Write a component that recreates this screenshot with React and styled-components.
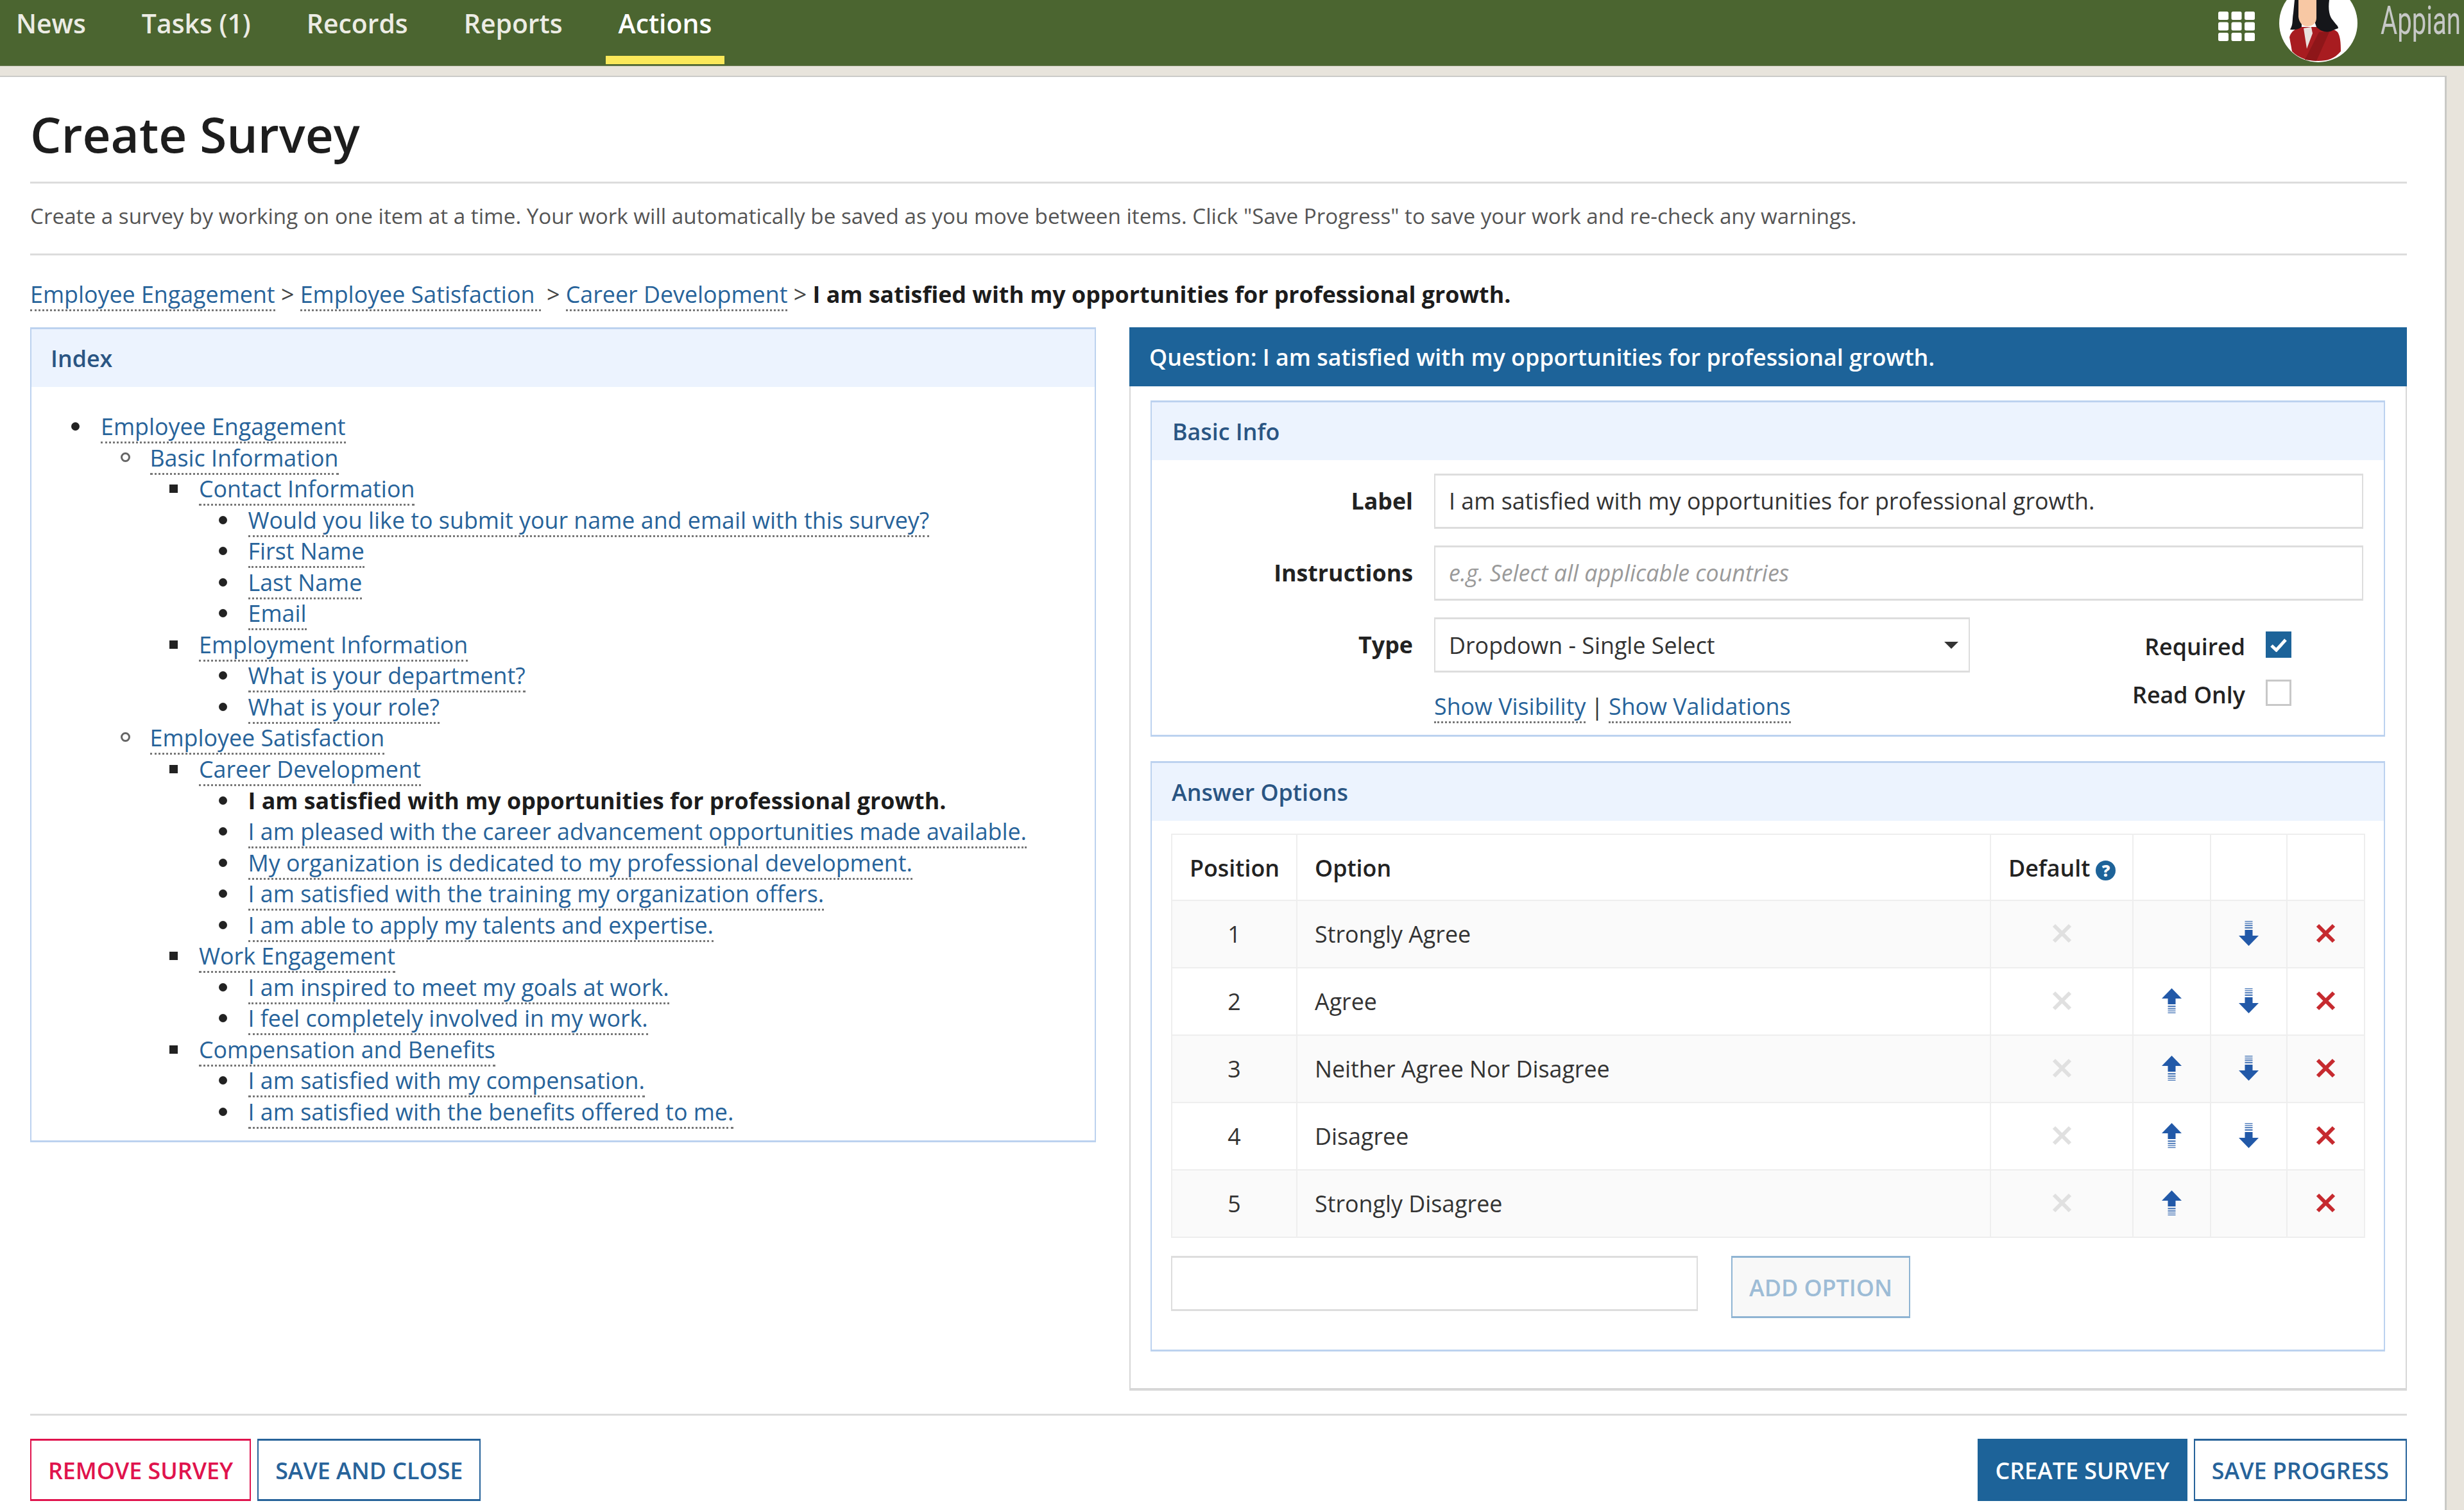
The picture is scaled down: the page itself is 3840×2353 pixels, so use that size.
import React from "react";
import styled, { createGlobalStyle } from "styled-components";

const Global = createGlobalStyle`
  html, body { margin: 0; padding: 0; background: #e8e4dc; }
  body { font-family: "Open Sans", "Liberation Sans", sans-serif; color: #222; }
  * { box-sizing: border-box; }
`;

const Page = styled.div`
  width: 3840px;
  height: 2353px;
  overflow: hidden;
  background: #e8e4dc;
`;

const Header = styled.header`
  height: 103px;
  padding-left: 5px;
  display: flex;
  justify-content: space-between;
  background: #4b6530;
  border-bottom: 1px solid #6f7f5a;
`;

const Nav = styled.nav`
  display: flex;
  gap: 47px;
`;

const NavItem = styled.a`
  height: 100px;
  padding: 0 20px;
  line-height: 72px;
  font-size: 40.9px;
  font-weight: 600;
  color: ${p => (p.$active ? "#ffffff" : "#ecece4")};
  border-bottom: 13px solid ${p => (p.$active ? "#fbe95a" : "transparent")};
`;

const HeaderRight = styled.div`
  display: flex;
  align-items: flex-start;
  padding-right: 3px;
`;

const AppGrid = styled.svg`
  width: 57px;
  height: 46px;
  margin-top: 18px;
  margin-right: 38px;
`;

const Avatar = styled.svg`
  width: 122px;
  height: 98px;
`;

const Logo = styled.svg`
  width: 127px;
  height: 70px;
  margin-left: 36px;
  text {
    font-family: Roboto, "Open Sans", sans-serif;
    font-size: 62px;
    fill: #c6c8c6;
  }
`;

const Card = styled.main`
  width: 3813px;
  height: 2250px;
  margin-top: 15px;
  padding: 0 59px 0 47px;
  background: #fff;
  border-top: 2px solid #cbcbc8;
  border-right: 3px solid #c9c9c6;
`;

const Title = styled.h1`
  margin: 0;
  height: 163px;
  padding-top: 33px;
  font-size: 76.5px;
  line-height: 110px;
  font-weight: 600;
  color: #1d1d1d;
`;

const Rule = styled.hr`
  margin: 0;
  height: 3px;
  border: 0;
  background: #dcdcdc;
`;

const Intro = styled.p`
  margin: 0;
  height: 109px;
  padding-bottom: 10px;
  display: flex;
  align-items: center;
  font-size: 33.23px;
  color: #555;
  white-space: pre;
`;

const Crumbs = styled.div`
  height: 112px;
  padding-top: 36px;
  font-size: 35.8px;
  line-height: 48px;
  color: #444;
  white-space: pre;
  strong { font-weight: 700; color: #1c1c1c; }
`;

const Link = styled.a`
  color: #27639a;
  border-bottom: 3px dotted #777;
`;

const Columns = styled.div`
  display: flex;
  gap: 52px;
  align-items: flex-start;
`;

const IndexPanel = styled.section`
  width: 1661px;
  height: 1270px;
  border: 2px solid #bcd2ef;
  border-width: 3px 2px;
`;

const LightHead = styled.h2`
  margin: 0;
  height: ${p => p.$h || 90}px;
  padding-left: ${p => p.$pl || 30}px;
  display: flex;
  align-items: center;
  background: #ecf3fe;
  font-size: 35.8px;
  font-weight: 600;
  color: #2a5583;
`;

const Tree = styled.ul`
  margin: 0;
  padding: ${p => (p.$root ? "37px 0 0 108px" : "0 0 0 76.5px")};
  font-size: 35.8px;
  line-height: 48.55px;
  list-style: none;
  strong { font-weight: 700; color: #1c1c1c; }
`;

const TreeItem = styled.li`
  &::before {
    content: "";
    box-sizing: border-box;
    display: inline-block;
    width: ${p => (p.$level === 1 ? 15 : 13)}px;
    height: ${p => (p.$level === 1 ? 15 : 13)}px;
    margin-left: -46px;
    margin-right: ${p => (p.$level === 1 ? 31 : 33)}px;
    vertical-align: 7px;
    background: ${p => (p.$level === 1 ? "transparent" : "#222")};
    border: ${p => (p.$level === 1 ? "3px solid #666" : "0")};
    border-radius: ${p => (p.$level === 2 ? "0" : "50%")};
  }
`;

const QuestionPanel = styled.section`
  width: 1991px;
  height: 1657px;
  padding: 22px 32px 0 31px;
  border: 2px solid #d7d7d7;
  border-top: 0;
  border-bottom-width: 4px;
`;

const QuestionBar = styled.h2`
  margin: -22px -34px 22px -33px;
  height: 92px;
  padding-left: 31px;
  display: flex;
  align-items: center;
  background: #1d6399;
  color: #fff;
  font-size: 35.8px;
  font-weight: 600;
`;

const SubPanel = styled.section`
  height: ${p => p.$h}px;
  margin-bottom: ${p => p.$mb || 0}px;
  border: solid #bcd2ef;
  border-width: 3px 2px;
`;

const FormBody = styled.div`
  padding: 21px 32px 0 0;
  display: grid;
  grid-template-columns: 407px 1fr;
  column-gap: 33px;
  row-gap: 26px;
`;

const FieldLabel = styled.label`
  height: 84px;
  display: flex;
  align-items: center;
  justify-content: flex-end;
  font-size: 35.8px;
  font-weight: 700;
  color: #222;
`;

const TextInput = styled.input`
  width: ${p => p.$w || "100%"};
  height: 86px;
  padding: 0 21px 3px;
  font: 400 35.8px "Open Sans", sans-serif;
  color: #333;
  background: #fff;
  border: solid #ddd;
  border-width: 3px 2px;
  border-radius: 0;
  outline: none;
  &::placeholder { font-style: italic; color: #9a9a9a; opacity: 1; }
`;

const TypeRow = styled.div`
  display: flex;
  justify-content: space-between;
  padding-right: 112px;
`;

const TypeStack = styled.div`
  width: 835px;
`;

const SelectBox = styled.div`
  height: 86px;
  padding: 0 16px 0 21px;
  display: flex;
  align-items: center;
  justify-content: space-between;
  border: solid #ddd;
  border-width: 3px 2px;
  font-size: 35.8px;
  color: #333;
`;

const Caret = styled.i`
  width: 0;
  height: 0;
  border-style: solid;
  border-width: 11px 11px 0;
  border-color: #333 transparent transparent;
`;

const LinkRow = styled.div`
  margin-top: 28px;
  font-size: 35.8px;
  line-height: 48px;
  color: #333;
  white-space: pre;
`;

const Pipe = styled.span`
  margin: 0 8px;
`;

const Checks = styled.div`
  padding-top: 22px;
  display: flex;
  flex-direction: column;
  gap: 34px;
`;

const CheckRow = styled.div`
  display: flex;
  align-items: center;
  justify-content: flex-end;
  gap: 32px;
  height: 41px;
  font-size: 35.8px;
  font-weight: 600;
  color: #222;
`;

const CheckText = styled.span`
  margin-top: 4px;
`;

const CheckBox = styled.span`
  width: 40px;
  height: 41px;
  display: flex;
  align-items: center;
  justify-content: center;
  background: ${p => (p.$on ? "#1d6399" : "#fff")};
  border: ${p => (p.$on ? "0" : "3px solid #c8c8c8")};
`;

const OptionsBody = styled.div`
  padding: 20px 30px 0;
`;

const Table = styled.table`
  width: 1859px;
  table-layout: fixed;
  border-collapse: collapse;
  font-size: 35.8px;
  color: #333;
`;

const Cell = styled.td`
  height: 105px;
  padding: 0 ${p => (p.$pad ? "27px" : "0")} 2px;
  text-align: ${p => (p.$pad ? "left" : "center")};
  border: 2px solid #eeeeee;
  svg { display: block; margin: 0 auto; }
`;

const HeadCell = styled.th`
  width: ${p => p.$w}px;
  height: 103px;
  padding: 0 27px;
  text-align: ${p => (p.$center ? "center" : "left")};
  font-weight: 600;
  color: #222;
  border: 2px solid #eeeeee;
  white-space: nowrap;
`;

const Row = styled.tr`
  background: ${p => (p.$odd ? "#fafafa" : "#fff")};
`;

const Help = styled.span`
  display: inline-flex;
  align-items: center;
  justify-content: center;
  width: 31px;
  height: 31px;
  margin-left: 9px;
  border-radius: 50%;
  background: #1d6399;
  color: #fff;
  font-size: 25px;
  font-weight: 800;
  line-height: 1;
`;

const AddRow = styled.div`
  margin-top: 28px;
  display: flex;
  gap: 52px;
  align-items: flex-start;
`;

const Button = styled.button`
  height: 97px;
  padding: 0 26px;
  font: 600 35.8px "Open Sans", sans-serif;
  color: ${p => p.$color};
  background: ${p => p.$bg || "#fff"};
  border: solid ${p => p.$line};
  border-width: 3px 2px;
  border-radius: 0;
  white-space: nowrap;
`;

const Footer = styled.footer`
  padding-top: 36px;
  display: flex;
  justify-content: space-between;
`;

const ButtonGroup = styled.div`
  display: flex;
  gap: 10px;
`;

const FooterRule = styled(Rule)`
  margin-top: 36px;
`;

const tree = [
  ["Employee Engagement", [
    ["Basic Information", [
      ["Contact Information", [
        ["Would you like to submit your name and email with this survey?"],
        ["First Name"], ["Last Name"], ["Email"],
      ]],
      ["Employment Information", [["What is your department?"], ["What is your role?"]]],
    ]],
    ["Employee Satisfaction", [
      ["Career Development", [
        ["I am satisfied with my opportunities for professional growth.", null, true],
        ["I am pleased with the career advancement opportunities made available."],
        ["My organization is dedicated to my professional development."],
        ["I am satisfied with the training my organization offers."],
        ["I am able to apply my talents and expertise."],
      ]],
      ["Work Engagement", [["I am inspired to meet my goals at work."], ["I feel completely involved in my work."]]],
      ["Compensation and Benefits", [["I am satisfied with my compensation."], ["I am satisfied with the benefits offered to me."]]],
    ]],
  ]],
];

const TreeList = ({ items, level = 0 }) => (
  <Tree $root={level === 0}>
    {items.map(([label, kids, current]) => (
      <TreeItem key={label} $level={level}>
        {current ? <strong>{label}</strong> : <Link>{label}</Link>}
        {kids && <TreeList items={kids} level={level + 1} />}
      </TreeItem>
    ))}
  </Tree>
);

const Cross = ({ color }) => (
  <svg width="31" height="31" viewBox="0 0 31 31">
    <path d="M3 3 28 28M28 3 3 28" stroke={color} strokeWidth="6" fill="none" />
  </svg>
);

const Arrow = ({ down }) => (
  <svg width="31" height="39" viewBox="0 0 31 39" style={down ? { transform: "scaleY(-1)" } : undefined}>
    <path d="M15.5 0 31 16H21.5V25H9.5V16H0Z" fill="#2259a8" />
    <path d="M9.5 27h12v2.4h-12zM9.5 31h12v2h-12zM9.5 34.4h12v1.6h-12zM9.5 37.4h12v1.6h-12z" fill="#2259a8" opacity=".75" />
  </svg>
);

const options = ["Strongly Agree", "Agree", "Neither Agree Nor Disagree", "Disagree", "Strongly Disagree"];

const Face = () => (
  <Avatar viewBox="0 0 122 98">
    <circle cx="61" cy="36" r="61" fill="#fff" />
    <path d="M16 58C18 49 26 44 34 42H60C72 42 85 44 91 50 95 56 96 66 96 80 86 92 74 95 61 95 46 95 30 91 20 80Z" fill="#a81c20" />
    <path d="M62 50 40 93 58 95 78 50Z" fill="#8e1619" />
    <path d="M38 44 43 76 52 52 50 42Z" fill="#e9e2de" />
    <path d="M24 0 22 20C20 32 22 38 17 46 24 47 30 46 35 42L34 0Z" fill="#15161a" />
    <path d="M54 0H78C76 14 78 26 84 32 88 38 92 40 92 44L84 47C76 52 66 50 58 42L54 30Z" fill="#15161a" />
    <path d="M30 0H58V28C58 36 52 41 44 41 36 41 31 35 30 26Z" fill="#f8c8a4" />
  </Avatar>
);

export default function App() {
  return (
    <Page>
      <Global />
      <Header>
        <Nav>
          {["News", "Tasks (1)", "Records", "Reports"].map(n => <NavItem key={n}>{n}</NavItem>)}
          <NavItem $active>Actions</NavItem>
        </Nav>
        <HeaderRight>
          <AppGrid viewBox="0 0 57 46">
            {[0, 1, 2].flatMap(r => [0, 1, 2].map(c => (
              <rect key={`${r}${c}`} x={c * 20.5} y={r * 16.5} width="16" height="13" rx="2.5" fill="#fff" />
            )))}
          </AppGrid>
          <Face />
          <Logo viewBox="0 0 127 70">
            <text x="0" y="53" textLength="125" lengthAdjust="spacingAndGlyphs">Appian</text>
          </Logo>
        </HeaderRight>
      </Header>
      <Card>
        <Title>Create Survey</Title>
        <Rule />
        <Intro>Create a survey by working on one item at a time. Your work will automatically be saved as you move between items. Click "Save Progress" to save your work and re-check any warnings.</Intro>
        <Rule />
        <Crumbs>
          <Link>Employee Engagement</Link> &gt; <Link>Employee Satisfaction </Link> &gt; <Link>Career Development</Link> &gt; <strong>I am satisfied with my opportunities for professional growth.</strong>
        </Crumbs>
        <Columns>
          <IndexPanel>
            <LightHead>Index</LightHead>
            <TreeList items={tree} />
          </IndexPanel>
          <QuestionPanel>
            <QuestionBar>Question: I am satisfied with my opportunities for professional growth.</QuestionBar>
            <SubPanel $h={524} $mb={38}>
              <LightHead $pl={32}>Basic Info</LightHead>
              <FormBody>
                <FieldLabel>Label</FieldLabel>
                <TextInput readOnly value="I am satisfied with my opportunities for professional growth." />
                <FieldLabel>Instructions</FieldLabel>
                <TextInput readOnly placeholder="e.g. Select all applicable countries" />
                <FieldLabel>Type</FieldLabel>
                <TypeRow>
                  <TypeStack>
                    <SelectBox>Dropdown - Single Select<Caret /></SelectBox>
                    <LinkRow><Link>Show Visibility</Link><Pipe>|</Pipe><Link>Show Validations</Link></LinkRow>
                  </TypeStack>
                  <Checks>
                    <CheckRow><CheckText>Required</CheckText>
                      <CheckBox $on>
                        <svg width="26" height="22" viewBox="0 0 26 22"><path d="M2 12 9.500 19 24 3" stroke="#fff" strokeWidth="5" fill="none" /></svg>
                      </CheckBox>
                    </CheckRow>
                    <CheckRow><CheckText>Read Only</CheckText><CheckBox /></CheckRow>
                  </Checks>
                </TypeRow>
              </FormBody>
            </SubPanel>
            <SubPanel $h={920}>
              <LightHead $pl={31}>Answer Options</LightHead>
              <OptionsBody>
                <Table>
                  <thead>
                    <Row>
                      <HeadCell $w={195} $center>Position</HeadCell>
                      <HeadCell $w={1081}>Option</HeadCell>
                      <HeadCell $w={222}>Default<Help>?</Help></HeadCell>
                      <HeadCell $w={121} />
                      <HeadCell $w={119} />
                      <HeadCell $w={121} />
                    </Row>
                  </thead>
                  <tbody>
                    {options.map((o, i) => (
                      <Row key={o} $odd={i % 2 === 0}>
                        <Cell>{i + 1}</Cell>
                        <Cell $pad>{o}</Cell>
                        <Cell><Cross color="#e0e0e0" /></Cell>
                        <Cell>{i > 0 && <Arrow />}</Cell>
                        <Cell>{i < 4 && <Arrow down />}</Cell>
                        <Cell><Cross color="#c62a2f" /></Cell>
                      </Row>
                    ))}
                  </tbody>
                </Table>
                <AddRow>
                  <TextInput readOnly $w="821px" />
                  <Button disabled $color="#9dbcd6" $bg="#f8f8f8" $line="#8fb4d3">ADD OPTION</Button>
                </AddRow>
              </OptionsBody>
            </SubPanel>
          </QuestionPanel>
        </Columns>
        <FooterRule />
        <Footer>
          <ButtonGroup>
            <Button $color="#e0134d" $line="#e0134d">REMOVE SURVEY</Button>
            <Button $color="#27639a" $line="#27639a">SAVE AND CLOSE</Button>
          </ButtonGroup>
          <ButtonGroup>
            <Button $color="#fff" $bg="#1d6399" $line="#1d6399">CREATE SURVEY</Button>
            <Button $color="#27639a" $line="#27639a">SAVE PROGRESS</Button>
          </ButtonGroup>
        </Footer>
      </Card>
    </Page>
  );
}
